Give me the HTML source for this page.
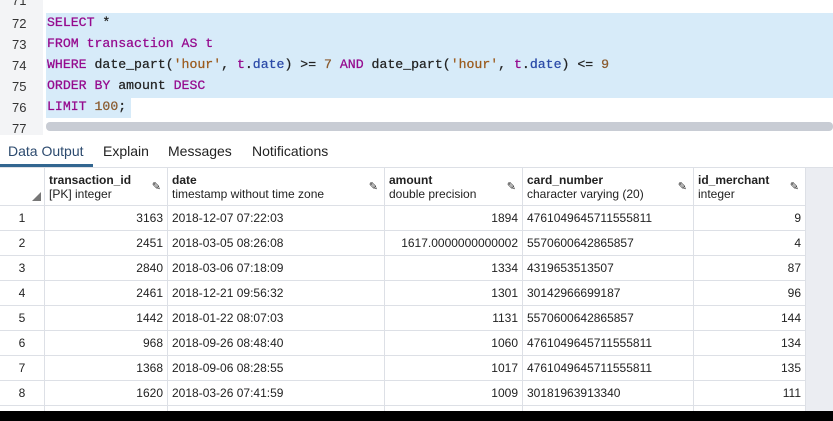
<!DOCTYPE html>
<html><head><style>
html,body{margin:0;width:833px;height:421px;overflow:hidden}
body{background:#fff;font-family:"Liberation Sans",sans-serif;position:relative}
.ed{position:absolute;left:0;top:0;width:833px;height:135px;background:#fff}
.gut{position:absolute;left:0;top:0;width:43px;height:135px;background:#f3f4f6}
.ln{position:absolute;left:12px;font:13px "Liberation Sans",sans-serif;color:#333}
.code{position:absolute;left:47px;font:13.2px "Liberation Mono",monospace;color:#222;white-space:pre;-webkit-text-stroke:0.25px}
.k{color:#950a8e}.n{color:#8a5a2e}.s{color:#9b5a1c}.v{color:#2b4aa8}
.sel{position:absolute;background:#d7ebf9}
.tabs{position:absolute;top:135px;left:0;width:833px;height:32px;border-bottom:1px solid #dde0e6}
.tab{position:absolute;top:8px;font-size:14px;color:#222}
.grid{position:absolute;top:167px;left:0;width:833px;height:244px;overflow:hidden}
table{position:absolute;top:0;left:-1px;border-collapse:collapse;font-size:12px;color:#222}
td,th{border:1px solid #dde0e6;padding:0 4px;height:24px;white-space:nowrap}
th{height:37px;text-align:left;font-weight:normal;vertical-align:middle;position:relative}
th b{display:block;font-weight:bold;font-size:12px}
.r{text-align:right}.c{text-align:center}
.pen{position:absolute;right:6px;top:12px;font-size:11px;color:#222}
</style></head><body>
<div class="ed">
<div class="gut"></div>
<div class="sel" style="left:46px;top:13px;width:787px;height:85px"></div>
<div class="sel" style="left:46px;top:98px;width:85px;height:20px"></div>
<div style="position:absolute;left:46px;top:122px;width:787px;height:9px;background:#c8ccd4;border-radius:4px"></div>
<div class="ln" style="top:-7px">71</div>
<div class="ln" style="top:16px">72</div>
<div class="ln" style="top:37px">73</div>
<div class="ln" style="top:58px">74</div>
<div class="ln" style="top:79px">75</div>
<div class="ln" style="top:100px">76</div>
<div class="ln" style="top:121px">77</div>
<div class="code" style="top:15px"><span class="k">SELECT</span> *</div>
<div class="code" style="top:36px"><span class="k">FROM transaction AS t</span></div>
<div class="code" style="top:57px"><span class="k">WHERE</span> date_part(<span class="s">'hour'</span>, <span class="k">t</span>.<span class="v">date</span>) &gt;= <span class="n">7</span> <span class="k">AND</span> date_part(<span class="s">'hour'</span>, <span class="k">t</span>.<span class="v">date</span>) &lt;= <span class="n">9</span></div>
<div class="code" style="top:78px"><span class="k">ORDER BY</span> amount <span class="k">DESC</span></div>
<div class="code" style="top:99px"><span class="k">LIMIT</span> <span class="n">100</span>;</div>
</div>
<div class="tabs">
<div class="tab" style="left:8px;color:#2c4a6e">Data Output</div>
<div style="position:absolute;left:0;top:29px;width:93px;height:3px;background:#326690"></div>
<div class="tab" style="left:103px">Explain</div>
<div class="tab" style="left:168px">Messages</div>
<div class="tab" style="left:252px">Notifications</div>
</div>
<div class="grid">
<div style="position:absolute;left:805px;top:1px;width:28px;height:243px;background:#ebedf2"></div>
<table>
<tr><th style="width:36px"><span style="position:absolute;right:3px;bottom:4px;width:0;height:0;border-left:9px solid transparent;border-bottom:9px solid #777"></span></th>
<th style="width:114px"><b>transaction_id</b>[PK] integer<span class="pen">✎</span></th>
<th style="width:208px"><b>date</b>timestamp without time zone<span class="pen">✎</span></th>
<th style="width:129px"><b>amount</b>double precision<span class="pen">✎</span></th>
<th style="width:162px"><b>card_number</b>character varying (20)<span class="pen">✎</span></th>
<th style="width:103px"><b>id_merchant</b>integer<span class="pen">✎</span></th></tr>
<tr><td class="c">1</td><td class="r">3163</td><td>2018-12-07 07:22:03</td><td class="r">1894</td><td>4761049645711555811</td><td class="r">9</td></tr>
<tr><td class="c">2</td><td class="r">2451</td><td>2018-03-05 08:26:08</td><td class="r">1617.0000000000002</td><td>5570600642865857</td><td class="r">4</td></tr>
<tr><td class="c">3</td><td class="r">2840</td><td>2018-03-06 07:18:09</td><td class="r">1334</td><td>4319653513507</td><td class="r">87</td></tr>
<tr><td class="c">4</td><td class="r">2461</td><td>2018-12-21 09:56:32</td><td class="r">1301</td><td>30142966699187</td><td class="r">96</td></tr>
<tr><td class="c">5</td><td class="r">1442</td><td>2018-01-22 08:07:03</td><td class="r">1131</td><td>5570600642865857</td><td class="r">144</td></tr>
<tr><td class="c">6</td><td class="r">968</td><td>2018-09-26 08:48:40</td><td class="r">1060</td><td>4761049645711555811</td><td class="r">134</td></tr>
<tr><td class="c">7</td><td class="r">1368</td><td>2018-09-06 08:28:55</td><td class="r">1017</td><td>4761049645711555811</td><td class="r">135</td></tr>
<tr><td class="c">8</td><td class="r">1620</td><td>2018-03-26 07:41:59</td><td class="r">1009</td><td>30181963913340</td><td class="r">111</td></tr>
<tr><td></td><td></td><td></td><td></td><td></td><td></td></tr>
</table>
</div>
<div style="position:absolute;left:0;top:411px;width:833px;height:10px;background:#000"></div>
</body></html>
